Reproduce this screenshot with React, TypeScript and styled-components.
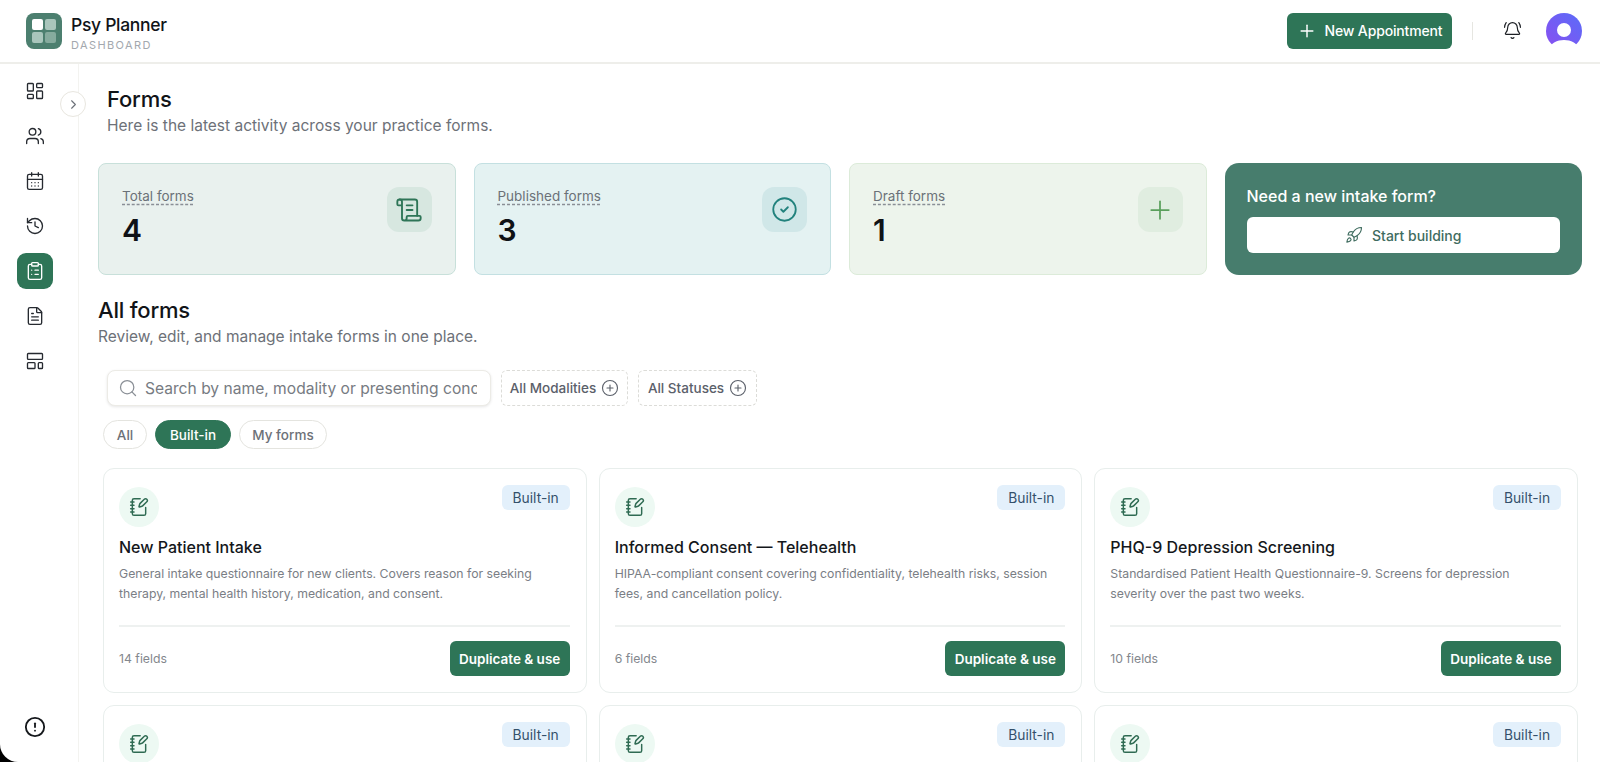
import styled, { createGlobalStyle } from 'styled-components';
import {
    BellRing,
    CalendarDays,
    ChevronRight,
    CircleAlert,
    CircleCheck,
    CirclePlus,
    ClipboardList,
    FileText,
    History,
    LayoutDashboard,
    LayoutTemplate,
    NotebookPen,
    Plus,
    Rocket,
    ScrollText,
    Search,
    Users,
} from 'lucide-react';

const FONT = `Inter, "Noto Sans", "Liberation Sans", sans-serif`;
const GREEN = '#2e7557';

const GlobalStyle = createGlobalStyle`
    html, body {
        margin: 0;
        padding: 0;
        height: 100%;
        background: #000;
        overflow: hidden;
    }
    * {
        box-sizing: border-box;
    }
    body {
        font-family: ${FONT};
        color: #111418;
    }
`;

const Shell = styled.div`
    width: 1600px;
    height: 762px;
    background: #fff;
    border-bottom-left-radius: 18px;
    overflow: hidden;
    display: flex;
    flex-direction: column;
`;

const Header = styled.header`
    flex: none;
    height: 64px;
    padding: 0 18px 1px 26px;
    border-bottom: 2px solid #eeeeea;
    display: flex;
    align-items: center;
    justify-content: space-between;
`;

const Brand = styled.div`
    display: flex;
    align-items: center;
    gap: 9px;
`;

const LogoBox = styled.div`
    width: 36px;
    height: 36px;
    border-radius: 8px;
    background: #4c7f6f;
    padding: 6px;
    display: grid;
    grid-template-columns: 1fr 1fr;
    gap: 2px;
`;

const LogoCell = styled.span<{ $tone: string }>`
    border-radius: 2px;
    background: ${(props) => props.$tone};
`;

const BrandText = styled.div`
    margin-top: 5px;
    display: flex;
    flex-direction: column;
    gap: 2px;
`;

const BrandName = styled.div`
    font-size: 17.5px;
    line-height: 22px;
    font-weight: 500;
    letter-spacing: -0.3px;
`;

const BrandSub = styled.div`
    font-size: 11px;
    line-height: 14px;
    letter-spacing: 1.4px;
    color: #a3a8ae;
`;

const HeaderActions = styled.div`
    display: flex;
    align-items: center;
`;

const NewButton = styled.button`
    width: 165px;
    height: 36px;
    border: none;
    border-radius: 6px;
    background: ${GREEN};
    color: #fff;
    font-family: ${FONT};
    font-size: 14px;
    font-weight: 500;
    letter-spacing: -0.15px;
    display: flex;
    align-items: center;
    justify-content: center;
    gap: 8px;
`;

const HeaderDivider = styled.span`
    width: 1px;
    height: 18px;
    margin: 0 30px 0 20px;
    background: #e6e6e1;
`;

const BellWrap = styled.span`
    display: flex;
    margin-right: 24px;
    color: #1c1f24;
`;

const Avatar = styled.svg`
    width: 36px;
    height: 36px;
    display: block;
`;

const Body = styled.div`
    flex: 1;
    min-height: 0;
    display: flex;
    position: relative;
`;

const Sidebar = styled.aside`
    flex: none;
    width: 79px;
    padding: 9px 0 17px 17px;
    border-right: 1px solid #f3f3f0;
    display: flex;
    flex-direction: column;
    justify-content: space-between;
`;

const NavList = styled.nav`
    display: flex;
    flex-direction: column;
    gap: 9px;
`;

const NavItem = styled.div<{ $active?: boolean }>`
    width: 36px;
    height: 36px;
    border-radius: 9px;
    display: flex;
    align-items: center;
    justify-content: center;
    background: ${(props) => (props.$active ? GREEN : 'transparent')};
    color: ${(props) => (props.$active ? '#fff' : '#262a30')};
`;

const CollapseToggle = styled.div`
    position: absolute;
    left: 60px;
    top: 27px;
    width: 26px;
    height: 26px;
    border-radius: 50%;
    background: #fff;
    border: 1px solid #e8e6df;
    color: #6b7078;
    display: flex;
    align-items: center;
    justify-content: center;
`;

const Main = styled.main`
    flex: 1;
    min-width: 0;
    overflow: hidden;
    padding: 20px 18px 0 19px;
`;

const PageHead = styled.div`
    padding-left: 9px;
    margin-bottom: 26px;
`;

const PageTitle = styled.h1`
    margin: 0;
    font-size: 22px;
    line-height: 30px;
    font-weight: 500;
    letter-spacing: -0.2px;
`;

const SubText = styled.p`
    margin: 1px 0 0;
    font-size: 15.5px;
    line-height: 22px;
    color: #6d7178;
`;

const StatGrid = styled.section`
    display: grid;
    grid-template-columns: repeat(4, 1fr);
    gap: 18px;
    margin-bottom: 20px;
`;

const StatCard = styled.div<{ $bg: string; $line: string }>`
    height: 112px;
    border-radius: 8px;
    padding: 23px;
    background: ${(props) => props.$bg};
    border: 1px solid ${(props) => props.$line};
    display: flex;
    justify-content: space-between;
    align-items: flex-start;
`;

const StatLabel = styled.div`
    font-size: 13.5px;
    line-height: 19px;
    color: #6b7178;
    text-decoration: underline dashed #8a8f96;
    text-underline-offset: 3px;
`;

const StatValue = styled.div`
    margin-top: 6px;
    font-size: 30px;
    line-height: 36px;
    font-weight: 600;
    color: #0f1216;
`;

const StatIcon = styled.div<{ $bg: string; $fg: string }>`
    width: 45px;
    height: 45px;
    border-radius: 12px;
    background: ${(props) => props.$bg};
    color: ${(props) => props.$fg};
    display: flex;
    align-items: center;
    justify-content: center;
`;

const PromoCard = styled.div`
    height: 112px;
    border-radius: 14px;
    padding: 22px;
    background: #477d6d;
    display: flex;
    flex-direction: column;
    gap: 10px;
`;

const PromoTitle = styled.div`
    font-size: 16px;
    line-height: 22px;
    font-weight: 500;
    color: #fff;
`;

const PromoButton = styled.button`
    height: 36px;
    border: none;
    border-radius: 6px;
    background: #fff;
    color: #3f6c5f;
    font-family: ${FONT};
    font-size: 14px;
    font-weight: 500;
    display: flex;
    align-items: center;
    justify-content: center;
    gap: 9px;
`;

const SectionHead = styled.div`
    margin-bottom: 22px;
`;

const Toolbar = styled.div`
    padding-left: 9px;
    display: flex;
    align-items: center;
    gap: 10px;
    margin-bottom: 14px;
`;

const SearchBox = styled.label`
    width: 384px;
    height: 36px;
    padding: 0 13px 0 10px;
    border: 1px solid #ecebe6;
    border-radius: 8px;
    background: #fff;
    box-shadow: 0 1px 3px rgba(0, 0, 0, 0.1);
    display: flex;
    align-items: center;
    gap: 7px;
    color: #8a8f96;
`;

const SearchInput = styled.input`
    flex: 1;
    min-width: 0;
    border: none;
    outline: none;
    padding: 0;
    background: transparent;
    font-family: ${FONT};
    font-size: 15.6px;
    color: #6d7178;

    &::placeholder {
        color: #777b82;
        opacity: 1;
    }
`;

const FilterButton = styled.button<{ $width: number }>`
    width: ${(props) => props.$width}px;
    height: 36px;
    padding: 0;
    border: 1px dashed #dcdcd8;
    border-radius: 6px;
    background: #fff;
    color: #5b606a;
    font-family: ${FONT};
    font-size: 13.5px;
    font-weight: 500;
    display: flex;
    align-items: center;
    justify-content: center;
    gap: 5px;
`;

const PillRow = styled.div`
    padding-left: 5px;
    display: flex;
    gap: 8px;
    margin-bottom: 19px;
`;

const Pill = styled.button<{ $active?: boolean; $width: number }>`
    width: ${(props) => props.$width}px;
    height: 29px;
    padding: 0;
    border-radius: 15px;
    border: 1px solid ${(props) => (props.$active ? GREEN : '#e4e4df')};
    background: ${(props) => (props.$active ? GREEN : '#fff')};
    color: ${(props) => (props.$active ? '#fff' : '#6d7178')};
    font-family: ${FONT};
    font-size: 13.5px;
    font-weight: 500;
`;

const FormGrid = styled.section`
    padding: 0 4px 0 5px;
    display: grid;
    grid-template-columns: repeat(3, 1fr);
    gap: 12px;
`;

const FormCard = styled.article`
    min-height: 225px;
    padding: 16px 16px 16px 15px;
    border: 1px solid #e8eeec;
    border-radius: 11px;
    background: #fff;
    display: flex;
    flex-direction: column;
`;

const CardTop = styled.div`
    display: flex;
    justify-content: space-between;
    align-items: flex-start;
`;

const CardIcon = styled.div`
    margin-top: 2px;
    width: 40px;
    height: 40px;
    border-radius: 50%;
    background: #edf9f3;
    color: #2f6b53;
    display: flex;
    align-items: center;
    justify-content: center;
`;

const Badge = styled.span`
    width: 68px;
    height: 25px;
    border-radius: 6px;
    background: #e3f0fb;
    color: #34506b;
    font-size: 13.8px;
    display: flex;
    align-items: center;
    justify-content: center;
`;

const CardTitle = styled.h3`
    margin: 9px 0 6px;
    font-size: 16px;
    line-height: 22px;
    font-weight: 500;
    color: #14171b;
`;

const CardText = styled.p`
    margin: 0;
    max-width: 440px;
    font-size: 12.25px;
    line-height: 20px;
    color: #7a7e85;
`;

const CardFoot = styled.div`
    margin-top: auto;
    padding-top: 14px;
    border-top: 2px solid #eef1f0;
    display: flex;
    align-items: center;
    justify-content: space-between;
`;

const FieldCount = styled.span`
    font-size: 12.25px;
    color: #83878d;
`;

const UseButton = styled.button`
    width: 120px;
    height: 35px;
    padding: 0;
    border: none;
    border-radius: 6px;
    background: ${GREEN};
    color: #fff;
    font-family: ${FONT};
    font-size: 13.5px;
    font-weight: 600;
`;

const NAV_ICONS = [LayoutDashboard, Users, CalendarDays, History, ClipboardList, FileText, LayoutTemplate];

const FORMS = [
    {
        title: 'New Patient Intake',
        text: 'General intake questionnaire for new clients. Covers reason for seeking therapy, mental health history, medication, and consent.',
        fields: 14,
    },
    {
        title: 'Informed Consent — Telehealth',
        text: 'HIPAA-compliant consent covering confidentiality, telehealth risks, session fees, and cancellation policy.',
        fields: 6,
    },
    {
        title: 'PHQ-9 Depression Screening',
        text: 'Standardised Patient Health Questionnaire-9. Screens for depression severity over the past two weeks.',
        fields: 10,
    },
];

const CardHead = () => (
    <CardTop>
        <CardIcon>
            <NotebookPen size={20} strokeWidth={1.75} />
        </CardIcon>
        <Badge>Built-in</Badge>
    </CardTop>
);

export default function App() {
    return (
        <Shell>
            <GlobalStyle />
            <Header>
                <Brand>
                    <LogoBox>
                        <LogoCell $tone="#ffffff" />
                        <LogoCell $tone="#a9c6bc" />
                        <LogoCell $tone="#a9c6bc" />
                        <LogoCell $tone="#86ab9e" />
                    </LogoBox>
                    <BrandText>
                        <BrandName>Psy Planner</BrandName>
                        <BrandSub>DASHBOARD</BrandSub>
                    </BrandText>
                </Brand>
                <HeaderActions>
                    <NewButton>
                        <Plus size={20} strokeWidth={1.75} />
                        New Appointment
                    </NewButton>
                    <HeaderDivider />
                    <BellWrap>
                        <BellRing size={19} strokeWidth={1.5} />
                    </BellWrap>
                    <Avatar viewBox="0 0 36 36">
                        <defs>
                            <linearGradient id="avatarFill" x1="0" y1="1" x2="1" y2="0">
                                <stop offset="0" stopColor="#8a4ff0" />
                                <stop offset="1" stopColor="#5a6cf8" />
                            </linearGradient>
                        </defs>
                        <circle cx="18" cy="18" r="18" fill="url(#avatarFill)" />
                        <circle cx="18" cy="17" r="7" fill="#fff" />
                        <path d="M3 36c2-6 8-9 15-9s13 3 15 9z" fill="#fff" />
                    </Avatar>
                </HeaderActions>
            </Header>
            <Body>
                <Sidebar>
                    <NavList>
                        {NAV_ICONS.map((Icon, i) => (
                            <NavItem key={i} $active={i === 4}>
                                <Icon size={20} strokeWidth={1.6} />
                            </NavItem>
                        ))}
                    </NavList>
                    <NavItem>
                        <CircleAlert size={22} strokeWidth={2} color="#15181c" />
                    </NavItem>
                </Sidebar>
                <CollapseToggle>
                    <ChevronRight size={15} strokeWidth={1.75} />
                </CollapseToggle>
                <Main>
                    <PageHead>
                        <PageTitle>Forms</PageTitle>
                        <SubText>Here is the latest activity across your practice forms.</SubText>
                    </PageHead>
                    <StatGrid>
                        <StatCard $bg="#e9f1ee" $line="#c8e0da">
                            <div>
                                <StatLabel>Total forms</StatLabel>
                                <StatValue>4</StatValue>
                            </div>
                            <StatIcon $bg="#d7e7e0" $fg={GREEN}>
                                <ScrollText size={28} strokeWidth={1.6} />
                            </StatIcon>
                        </StatCard>
                        <StatCard $bg="#e4f2f2" $line="#c3e0e2">
                            <div>
                                <StatLabel>Published forms</StatLabel>
                                <StatValue>3</StatValue>
                            </div>
                            <StatIcon $bg="#d0e7e8" $fg="#22827d">
                                <CircleCheck size={27} strokeWidth={1.6} />
                            </StatIcon>
                        </StatCard>
                        <StatCard $bg="#edf4ec" $line="#dcebd9">
                            <div>
                                <StatLabel>Draft forms</StatLabel>
                                <StatValue>1</StatValue>
                            </div>
                            <StatIcon $bg="#e0ede0" $fg="#5a9f5c">
                                <Plus size={30} strokeWidth={1.4} />
                            </StatIcon>
                        </StatCard>
                        <PromoCard>
                            <PromoTitle>Need a new intake form?</PromoTitle>
                            <PromoButton>
                                <Rocket size={18} strokeWidth={1.5} />
                                Start building
                            </PromoButton>
                        </PromoCard>
                    </StatGrid>
                    <SectionHead>
                        <PageTitle>All forms</PageTitle>
                        <SubText>Review, edit, and manage intake forms in one place.</SubText>
                    </SectionHead>
                    <Toolbar>
                        <SearchBox>
                            <Search size={20} strokeWidth={1.5} />
                            <SearchInput placeholder="Search by name, modality or presenting concern..." readOnly />
                        </SearchBox>
                        <FilterButton $width={127}>
                            All Modalities
                            <CirclePlus size={18} strokeWidth={1.5} />
                        </FilterButton>
                        <FilterButton $width={119}>
                            All Statuses
                            <CirclePlus size={18} strokeWidth={1.5} />
                        </FilterButton>
                    </Toolbar>
                    <PillRow>
                        <Pill $width={44}>All</Pill>
                        <Pill $width={76} $active>
                            Built-in
                        </Pill>
                        <Pill $width={88}>My forms</Pill>
                    </PillRow>
                    <FormGrid>
                        {FORMS.map((form) => (
                            <FormCard key={form.title}>
                                <CardHead />
                                <CardTitle>{form.title}</CardTitle>
                                <CardText>{form.text}</CardText>
                                <CardFoot>
                                    <FieldCount>{form.fields} fields</FieldCount>
                                    <UseButton>Duplicate &amp; use</UseButton>
                                </CardFoot>
                            </FormCard>
                        ))}
                        {FORMS.map((form) => (
                            <FormCard key={`next-${form.title}`}>
                                <CardHead />
                            </FormCard>
                        ))}
                    </FormGrid>
                </Main>
            </Body>
        </Shell>
    );
}
